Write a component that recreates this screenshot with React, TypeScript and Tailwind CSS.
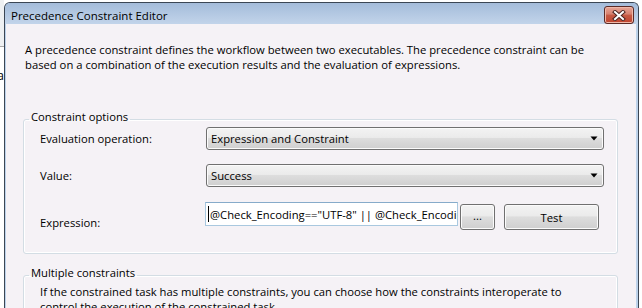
import React from "react";

const btnFace =
  "bg-[linear-gradient(#f3f3f3,#ebebeb_45%,#dddddd_50%,#cfcfcf)] border border-[#707070] rounded-[3px] shadow-[inset_0_0_0_1px_#fbfbfb]";

function ComboBox({ value }: { value: string }) {
  return (
    <div className={`flex h-[23px] w-[398px] items-center justify-between pl-[4px] pr-[5px] ${btnFace}`}>
      <span className="whitespace-nowrap">{value}</span>
      <svg width="8" height="5" viewBox="0 0 8 5">
        <path d="M0.5 0.5h7L4 4.5z" fill="#000" />
      </svg>
    </div>
  );
}

function CloseButton() {
  return (
    <div className="mt-[3px] mr-[4px] flex h-[18px] w-[30px] items-center justify-center rounded-[3px] border border-[#5a2a26] bg-[linear-gradient(#e6a596,#d7806e_45%,#c65b45_50%,#c0442f)] shadow-[inset_0_0_0_1px_#efb8a9]">
      <svg width="14" height="11" viewBox="0 0 14 11">
        <path d="M3 2l8 7M11 2l-8 7" stroke="#4a2420" strokeWidth="4" strokeLinecap="square" />
        <path d="M3 2l8 7M11 2l-8 7" stroke="#ffffff" strokeWidth="2" strokeLinecap="square" />
      </svg>
    </div>
  );
}

export default function App() {
  return (
    <div className="flex h-[308px] w-[642px] overflow-hidden bg-white font-['Open_Sans',sans-serif] text-[11.25px] leading-[15px] text-black">
      {/* bits of the window behind */}
      <div className="flex w-[4px] shrink-0 flex-col">
        <div className="h-[47px] border-b border-[#a9a9a9] bg-[#eef0f2]" />
        <div className="mt-[21px] flex justify-end overflow-hidden">
          <span className="text-[12px]">a</span>
        </div>
      </div>

      {/* dialog */}
      <div className="mt-[2px] flex w-[635px] shrink-0 flex-col rounded-t-[6px] border-x border-t border-[#3b4654] bg-[#bcd2ea]">
        <div className="flex h-[23px] items-start justify-between rounded-t-[5px] bg-[linear-gradient(#a4bcda,#c2d4ea)]">
          <span className="pt-[5px] pl-[6px] text-[11.5px]">Precedence Constraint Editor</span>
          <CloseButton />
        </div>

        <div className="ml-[1px] mr-[2px] flex-1 bg-[#f5f2f6] pt-[18px]">
          <p className="pl-[19px] whitespace-nowrap">
            A precedence constraint defines the workflow between two executables. The precedence constraint can be
            <br />
            based on a combination of the execution results and the evaluation of expressions.
          </p>

          <fieldset className="mt-[37px] ml-[17px] w-[595px] rounded-[3px] border border-[#d3dde4] pb-[23px] shadow-[inset_0_0_0_1px_#ffffff]">
            <legend className="ml-[5px] px-[2px] pb-[5px]">Constraint options</legend>

            <div className="-mt-[2px] flex items-center">
              <span className="w-[182px] pl-[16px]">Evaluation operation:</span>
              <ComboBox value="Expression and Constraint" />
            </div>

            <div className="mt-[14px] flex items-center">
              <span className="w-[182px] pl-[16px]">Value:</span>
              <ComboBox value="Success" />
            </div>

            <div className="mt-[15px] flex items-start">
              <span className="mt-[13px] w-[181px] pl-[16px]">Expression:</span>
              <div className="flex h-[24px] w-[253px] items-center overflow-hidden border border-[#a9c8df] border-t-[#86abca] bg-white pl-[2px]">
                <span className="mr-[1px] h-[16px] w-px shrink-0 bg-black" />
                <span className="whitespace-nowrap">@Check_Encoding=="UTF-8" || @Check_Encoding=="UTF-16"</span>
              </div>
              <button className={`mt-[2px] ml-[2px] flex h-[26px] w-[35px] items-center justify-center pb-[3px] ${btnFace}`}>
                ...
              </button>
              <button className={`mt-[2px] ml-[9px] flex h-[26px] w-[95px] items-center justify-center ${btnFace}`}>
                Test
              </button>
            </div>
          </fieldset>

          <fieldset className="mt-[11px] ml-[17px] h-[80px] w-[595px] rounded-[3px] border border-[#d3dde4] shadow-[inset_0_0_0_1px_#ffffff]">
            <legend className="ml-[5px] px-[2px] pb-[5px]">Multiple constraints</legend>
            <p className="-mt-[1px] pl-[16px] whitespace-nowrap">
              If the constrained task has multiple constraints, you can choose how the constraints interoperate to
              <br />
              control the execution of the constrained task.
            </p>
          </fieldset>
        </div>
      </div>
    </div>
  );
}
